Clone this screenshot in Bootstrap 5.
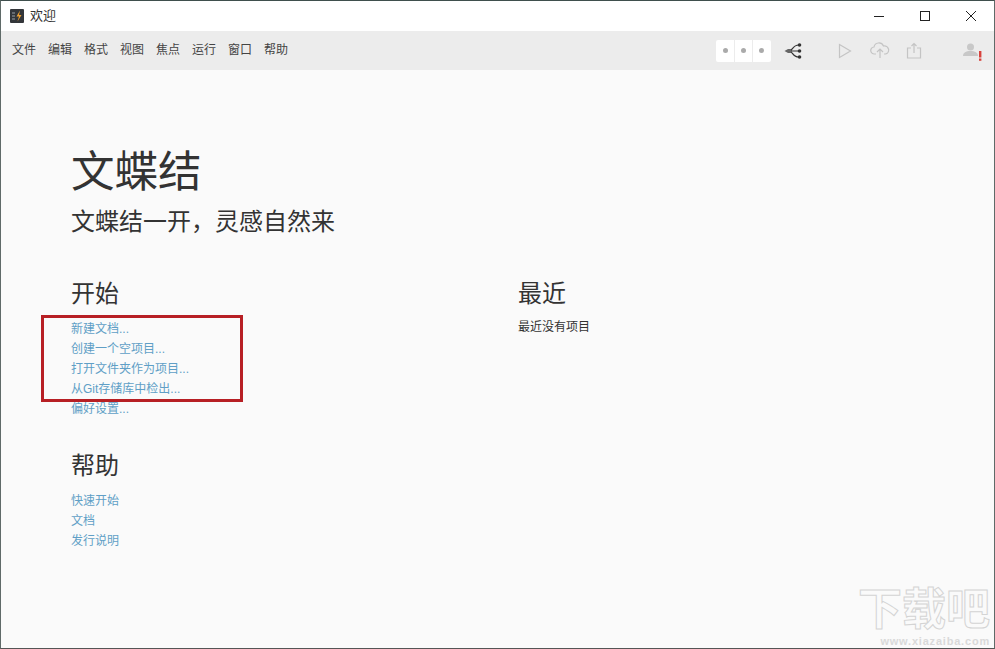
<!DOCTYPE html>
<html lang="zh-CN">
<head>
    <meta charset="UTF-8" />
    <title>欢迎</title>
    <link href="https://cdn.jsdelivr.net/npm/bootstrap@5.3.0/dist/css/bootstrap.min.css" rel="stylesheet" />
    <style>
        html, body { height: 100%; overflow: hidden; }
        body {
            font-family: "Liberation Sans", "Noto Sans CJK SC", sans-serif;
            background: #fafafa;
            color: #333;
        }
        .app-window {
            height: 649px;
            border: 1px solid #5f6a68;
            border-top-color: #3f4f4d;
            border-bottom-color: #555;
            position: relative;
        }
        .title-bar { height: 30px; background: #fff; padding-left: 9px; }
        .title-text { font-size: 13px; color: #333; margin-left: 6px; }
        .win-btn { width: 46px; height: 30px; }
        .menu-bar { height: 39px; background: #ececec; padding-left: 11px; padding-right: 11px; }
        .menu-item { font-size: 12px; color: #444; margin-right: 12px; margin-bottom: 2px; line-height: 1; }
        .dots-group { width: 55px; height: 22px; background: #fff; border-radius: 2px; margin-right: 13px; }
        .dots-group span { width: 18px; height: 22px; border-left: 1px solid #ececec; }
        .dots-group span:first-child { border-left: 0; }
        .dots-group i { width: 5px; height: 5px; border-radius: 50%; background: #aaa; display: block; }
        .icon-merge { margin-right: 36px; }
        .icon-cloud { margin-left: 18px; }
        .icon-share { margin-left: 16px; }
        .icon-user { margin-left: 41px; }
        .welcome-body { padding: 75px 0 0 70px; }
        .app-name { font-size: 43.500px; line-height: 54px; font-weight: 400; margin: 0; color: #333; }
        .app-slogan { font-size: 24px; line-height: 30px; margin: 8px 0 0; color: #333; font-weight: 400; }
        .col-start { width: 447px; }
        .section-title { font-size: 24px; line-height: 30px; font-weight: 400; margin: 0 0 10px; color: #333; }
        .start-links { margin-top: 42px; }
        .help-block { margin-top: 32px; }
        .link-line { display: block; font-size: 12px; line-height: 20px; color: #609fc6; text-decoration: none; }
        .recent-empty { font-size: 12px; line-height: 20px; color: #333; margin-top: -2px; }
        .red-box { position: absolute; left: 40px; top: 314px; width: 202px; height: 87px; border: 3px solid #b71f24; }
        .watermark { position: absolute; right: 4px; bottom: 0; text-align: right; color: #fafafa; pointer-events: none; }
        .wm-big { font-size: 44px; line-height: 51px; font-weight: 700; white-space: nowrap; -webkit-text-stroke: 1px #d4d4d4; }
        .wm-small { font-size: 11px; line-height: 13px; font-weight: 700; color: #d9d9d9; letter-spacing: .8px; white-space: nowrap; }
    </style>
</head>
<body>
<div class="app-window">
    <!-- title bar -->
    <div class="title-bar d-flex align-items-center">
        <svg width="14" height="14" viewBox="0 0 14 14">
            <rect width="14" height="14" rx="1" fill="#33363a" />
            <path d="M2 4h3M2 7h3M2 10h3" stroke="#9aa0a6" stroke-width="1" />
            <path d="M10 1.500L6.500 7.500h2.500L7.500 12.500l4-6.500H9z" fill="#f0a030" />
        </svg>
        <span class="title-text">欢迎</span>
        <div class="ms-auto d-flex">
            <div class="win-btn d-flex align-items-center justify-content-center">
                <svg width="12" height="12"><path d="M1 6.500h10" stroke="#222" /></svg>
            </div>
            <div class="win-btn d-flex align-items-center justify-content-center">
                <svg width="12" height="12"><rect x="1.500" y="1.500" width="9" height="9" fill="none" stroke="#222" /></svg>
            </div>
            <div class="win-btn d-flex align-items-center justify-content-center">
                <svg width="12" height="12"><path d="M1 1l10 10M11 1L1 11" stroke="#222" /></svg>
            </div>
        </div>
    </div>

    <!-- menu bar -->
    <div class="menu-bar d-flex align-items-center">
        <span class="menu-item">文件</span>
        <span class="menu-item">编辑</span>
        <span class="menu-item">格式</span>
        <span class="menu-item">视图</span>
        <span class="menu-item">焦点</span>
        <span class="menu-item">运行</span>
        <span class="menu-item">窗口</span>
        <span class="menu-item">帮助</span>
        <div class="ms-auto d-flex align-items-center">
            <div class="dots-group d-flex">
                <span class="d-flex align-items-center justify-content-center"><i></i></span>
                <span class="d-flex align-items-center justify-content-center"><i></i></span>
                <span class="d-flex align-items-center justify-content-center"><i></i></span>
            </div>
            <svg width="18" height="18" viewBox="0 0 18 18" class="icon-merge">
                <path d="M5 9C9 9 8 3 15 3M5 9h10M5 9c4 0 3 6 10 6" fill="none" stroke="#333" stroke-width="1.200" />
                <path d="M0.500 9l3.500-2h3v4H4z" fill="#666" />
                <circle cx="15.500" cy="3" r="1.800" fill="#333" />
                <circle cx="15.500" cy="9" r="1.800" fill="#333" />
                <circle cx="15.500" cy="15" r="1.800" fill="#333" />
            </svg>
            <svg width="14" height="16" viewBox="0 0 14 16">
                <path d="M1.500 1.500l11 6.500-11 6.500z" fill="none" stroke="#c4c4c4" stroke-width="1.200" />
            </svg>
            <svg width="20" height="17" viewBox="0 0 20 17" class="icon-cloud">
                <path d="M6 12H4.500a3.500 3.500 0 0 1-.5-7 5 5 0 0 1 9.500-1 4 4 0 0 1 2 8H14" fill="none" stroke="#c4c4c4" stroke-width="1.200" />
                <path d="M10 16V7M7 10l3-3 3 3" fill="none" stroke="#c4c4c4" stroke-width="1.200" />
            </svg>
            <svg width="16" height="17" viewBox="0 0 16 17" class="icon-share">
                <path d="M5 6H1.500v10h13V6H11" fill="none" stroke="#c4c4c4" stroke-width="1.200" />
                <path d="M8 11V1.500M5.500 4L8 1.500 10.500 4" fill="none" stroke="#c4c4c4" stroke-width="1.200" />
            </svg>
            <svg width="20" height="20" viewBox="0 0 20 20" class="icon-user">
                <circle cx="7.500" cy="6" r="3.500" fill="#c8c8c8" />
                <path d="M0 15c0-3.500 3-5 7.500-5s7.500 1.500 7.500 5z" fill="#c8c8c8" />
                <rect x="16" y="10" width="2.400" height="6.500" fill="#d8423c" />
                <rect x="16" y="17.500" width="2.400" height="2.300" fill="#d8423c" />
            </svg>
        </div>
    </div>

    <!-- welcome content -->
    <div class="welcome-body">
        <h1 class="app-name">文蝶结</h1>
        <p class="app-slogan">文蝶结一开，灵感自然来</p>
        <div class="d-flex start-links">
            <div class="col-start">
                <h2 class="section-title">开始</h2>
                <a class="link-line" href="#">新建文档...</a>
                <a class="link-line" href="#">创建一个空项目...</a>
                <a class="link-line" href="#">打开文件夹作为项目...</a>
                <a class="link-line" href="#">从Git存储库中检出...</a>
                <a class="link-line" href="#">偏好设置...</a>
                <div class="help-block">
                    <h2 class="section-title">帮助</h2>
                    <a class="link-line" href="#">快速开始</a>
                    <a class="link-line" href="#">文档</a>
                    <a class="link-line" href="#">发行说明</a>
                </div>
            </div>
            <div>
                <h2 class="section-title">最近</h2>
                <p class="recent-empty">最近没有项目</p>
            </div>
        </div>
    </div>

    <div class="red-box"></div>
    <div class="watermark">
        <div class="wm-big">下载吧</div>
        <div class="wm-small">www.xiazaiba.com</div>
    </div>
</div>
<script src="https://cdn.jsdelivr.net/npm/bootstrap@5.3.0/dist/js/bootstrap.bundle.min.js"></script>
</body>
</html>
